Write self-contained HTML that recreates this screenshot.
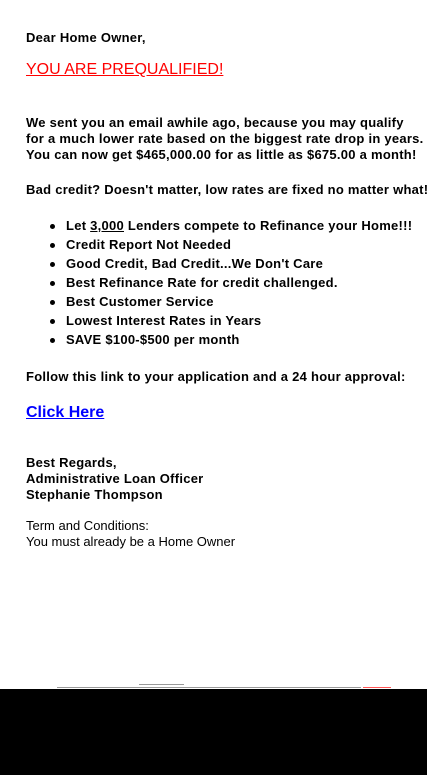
<!DOCTYPE html>
<html><head><style>
body{margin:0;width:427px;height:775px;background:#fff;position:relative;overflow:hidden;font-family:"Liberation Sans",Arial,sans-serif;}
.t{position:absolute;left:26px;white-space:nowrap;font-size:13px;font-weight:bold;letter-spacing:0.26px;color:#000;line-height:16px;}
.n{font-weight:normal;letter-spacing:0;}
.li{left:66px;}
.dot{position:absolute;left:50px;width:5px;height:5px;border-radius:50%;background:#000;}
</style></head><body>
<div class="t" style="top:30px">Dear Home Owner,</div>
<div class="t" style="top:60px;font-size:16px;font-weight:normal;letter-spacing:0;color:#f00;text-decoration:underline;line-height:19px">YOU ARE PREQUALIFIED!</div>
<div class="t" style="top:115px">We sent you an email awhile ago, because you may qualify</div>
<div class="t" style="top:131px">for a much lower rate based on the biggest rate drop in years.</div>
<div class="t" style="top:147px">You can now get $465,000.00 for as little as $675.00 a month!</div>
<div class="t" style="top:182px">Bad credit? Doesn't matter, low rates are fixed no matter what!</div>
<div class="dot" style="top:224px"></div><div class="t li" style="top:218px">Let <u>3,000</u> Lenders compete to Refinance your Home!!!</div>
<div class="dot" style="top:243px"></div><div class="t li" style="top:237px">Credit Report Not Needed</div>
<div class="dot" style="top:262px"></div><div class="t li" style="top:256px">Good Credit, Bad Credit...We Don't Care</div>
<div class="dot" style="top:281px"></div><div class="t li" style="top:275px">Best Refinance Rate for credit challenged.</div>
<div class="dot" style="top:300px"></div><div class="t li" style="top:294px">Best Customer Service</div>
<div class="dot" style="top:319px"></div><div class="t li" style="top:313px">Lowest Interest Rates in Years</div>
<div class="dot" style="top:338px"></div><div class="t li" style="top:332px">SAVE $100-$500 per month</div>
<div class="t" style="top:369px">Follow this link to your application and a 24 hour approval:</div>
<div class="t" style="top:403px;font-size:16px;color:#00f;text-decoration:underline;letter-spacing:0;line-height:19px">Click Here</div>
<div class="t" style="top:455px">Best Regards,</div>
<div class="t" style="top:471px">Administrative Loan Officer</div>
<div class="t" style="top:487px">Stephanie Thompson</div>
<div class="t n" style="top:518px;font-size:13px">Term and Conditions:</div>
<div class="t n" style="top:534px;font-size:13px">You must already be a Home Owner</div>
<div style="position:absolute;left:139px;top:684px;width:45px;height:1px;background:#999"></div>
<div style="position:absolute;left:57px;top:687px;width:304px;height:1px;background:#999"></div>
<div style="position:absolute;left:363px;top:687px;width:28px;height:1px;background:#f55"></div>
<div style="position:absolute;left:0;top:689px;width:427px;height:86px;background:#000"></div>
</body></html>
